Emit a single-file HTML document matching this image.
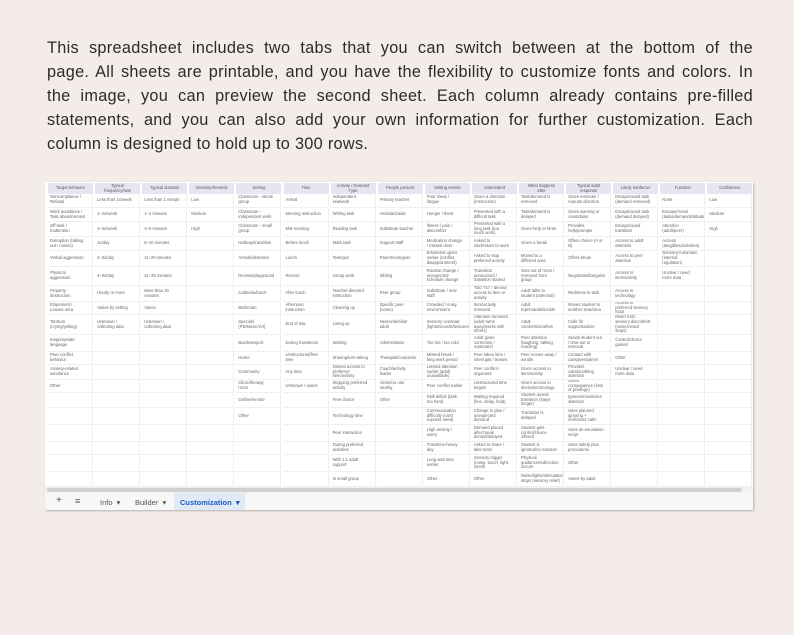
<!DOCTYPE html>
<html><head><meta charset="utf-8">
<style>
html,body{margin:0;padding:0;}
body{width:794px;height:635px;background:#f4ece8;position:relative;overflow:hidden;font-family:"Liberation Sans",sans-serif;}
.para{position:absolute;left:47px;top:36px;width:706px;font-size:16.3px;letter-spacing:0.3px;color:#2b2b2b;}
.para div{height:24px;line-height:24px;text-align:justify;text-align-last:justify;white-space:nowrap;overflow:hidden;}
.para div.last{text-align-last:left;}
.sheet{position:absolute;left:45px;top:182px;width:708px;height:328px;background:#fff;box-shadow:1px 1px 2px rgba(0,0,0,0.25);}
.col{position:absolute;top:0;width:47px;}
.h{position:absolute;left:1px;right:1px;top:1px;height:11px;background:#e6e6f2;font-size:4.2px;line-height:4.6px;color:#555;display:flex;align-items:center;justify-content:center;text-align:center;padding:0 6px;}
.c{position:absolute;left:0;width:46px;border-right:1px solid #efefef;border-bottom:1px solid #efefef;font-size:4.2px;line-height:4.8px;color:#666;display:flex;align-items:center;padding-left:3px;padding-right:6px;box-sizing:border-box;overflow:hidden;}
.scroll{position:absolute;left:0;top:305px;width:708px;height:6px;background:#f1f1f1;}
.thumb{position:absolute;left:2px;top:1px;width:695px;height:4px;background:#d0d0d0;border-radius:2px;}
.tabs{position:absolute;left:0;top:311px;width:708px;height:17px;background:#f7f7f7;font-size:7.5px;color:#555;}
.tabs span{position:absolute;top:5px;}
.cust{position:absolute;left:129px;top:0;width:71px;height:17px;background:#e2e9f6;}
</style></head><body>
<div class="para">
<div>This spreadsheet includes two tabs that you can switch between at the bottom of the</div>
<div>page. All sheets are printable, and you have the flexibility to customize fonts and colors. In</div>
<div>the image, you can preview the second sheet. Each column already contains pre-filled</div>
<div>statements, and you can also add your own information for further customization. Each</div>
<div class="last">column is designed to hold up to 300 rows.</div>
</div>
<div class="sheet" id="sheet">
<div class="scroll"><div class="thumb"></div></div>
<div class="tabs">
<span style="left:11px;font-size:10px;top:2px">+</span>
<span style="left:30px;font-size:9px;top:3px">≡</span>
<span style="left:55px">Info &nbsp;▾</span>
<span style="left:90px">Builder &nbsp;▾</span>
<div class="cust"></div>
<span style="left:135px;color:#1a5cc8;font-weight:bold">Customization &nbsp;▾</span>
</div>
</div>
<script>
var H=["Target behavior","Typical frequency/rate","Typical duration","Intensity/Severity","Setting","Time","Activity / Demand Type","People present","Setting events","Antecedent","What happens after","Typical adult response","Likely reinforcer","Function","Confidence"];
var D=[
["Noncompliance / Refusal","Work avoidance / Task abandonment","Off-task / Inattention","Disruption (talking out / noises)","Verbal aggression","Physical aggression","Property destruction","Elopement / Leaves area","Tantrum (crying/yelling)","Inappropriate language","Peer conflict behavior","Anxiety-related avoidance","Other"],
["Less than 1x/week","1–2x/week","3–4x/week","1x/day","2–3x/day","4–5x/day","Hourly or more","Varies by setting","Unknown / collecting data"],
["Less than 1 minute","1–2 minutes","3–5 minutes","6–10 minutes","11–20 minutes","21–30 minutes","More than 30 minutes","Varies","Unknown / collecting data"],
["Low","Medium","High"],
["Classroom - whole group","Classroom - independent work","Classroom - small group","Hallway/transition","Arrival/dismissal","Recess/playground","Cafeteria/lunch","Bathroom","Specials (PE/Music/Art)","Bus/transport","Home","Community","Clinic/therapy room","Online/remote","Other"],
["Arrival","Morning instruction","Mid-morning","Before lunch","Lunch","Recess","After lunch","Afternoon instruction","End of day","During transitions","Unstructured/free time","Any time","Unknown / varies"],
["Independent seatwork","Writing task","Reading task","Math task","Test/quiz","Group work","Teacher-directed instruction","Cleaning up","Lining up","Waiting","Sharing/turn-taking","Denied access to preferred item/activity","Stopping preferred activity","Free choice","Technology time","Peer interaction","During preferred activities","With 1:1 adult support","In small group"],
["Primary teacher","Assistant/aide","Substitute teacher","Support staff","Parent/caregiver","Sibling","Peer group","Specific peer (name)","New/unfamiliar adult","Administrator","Therapist/counselor","Coach/activity leader","Alone/no one nearby","Other"],
["Poor sleep / fatigue","Hunger / thirst","Illness / pain / discomfort","Medication change / missed dose","Emotional upset earlier (conflict, disappointment)","Routine change / unexpected schedule change","Substitute / new staff","Crowded / noisy environment","Sensory overload (lights/sounds/textures)","Too hot / too cold","Missed break / long work period","Limited attention earlier (adult unavailable)","Peer conflict earlier","Skill deficit (task too hard)","Communication difficulty (can't express need)","High anxiety / worry","Transition-heavy day","Long wait time earlier","Other"],
["Given a direction (instruction)","Presented with a difficult task","Presented with a long task (too much work)","Asked to start/return to work","Asked to stop preferred activity","Transition announced / transition started","Told \"no\" / denied access to item or activity","Item/activity removed","Attention removed (adult turns away/works with others)","Adult gives correction / reprimand","Peer takes item / interrupts / teases","Peer conflict / argument","Unstructured time begins","Waiting required (line, delay, hold)","Change in plan / unexpected demand","Demand placed after break denied/delayed","Asked to share / take turns","Sensory trigger (noise, touch, light, smell)","Other"],
["Task/demand is removed","Task/demand is delayed","Given help or hints","Given a break","Moved to a different area","Sent out of room / removed from group","Adult talks to student (attention)","Adult reprimands/scolds","Adult comforts/soothes","Peer attention (laughing, talking, reacting)","Peer moves away / avoids","Given access to item/activity","Given access to device/technology","Student avoids transition (stays longer)","Transition is delayed","Student gets control/choice offered","Student is ignored/no reaction","Physical guidance/redirection occurs","Noise/lights/stimulation stops (sensory relief)"],
["Gives reminder / repeats direction","Gives warning or countdown","Provides help/prompts","Offers choice (A or B)","Offers break","Negotiates/bargains","Redirects to task","Moves student to another seat/area","Calls for support/admin","Sends student out / time-out or removal","Contact with caregiver/parent","Provides calm/soothing attention","Gives consequence (loss of privilege)","Ignores/minimizes attention","Uses planned ignoring + reinforces calm","Uses de-escalation script","Uses safety plan procedures","Other","Varies by adult"],
["Escape/avoid task (demand removed)","Escape/avoid task (demand delayed)","Escape/avoid transition","Access to adult attention","Access to peer attention","Access to item/activity","Access to technology","Access to preferred sensory input","Relief from sensory discomfort (noise/crowd stops)","Control/choice gained","Other","Unclear / need more data"],
["None","Escape/Avoid (tasks/demands/situations)","Attention (adult/peer)","Access (tangibles/activities)","Sensory/Automatic (internal regulation)","Unclear / need more data"],
["Low","Medium","High"]];
var R=[193,208,222,237,251,267,286,302,315,335,352,365,380,393,408,425,442,455,472,487];
var s=document.getElementById('sheet'),h='';
for(var i=0;i<15;i++){
 h+='<div class="col" style="left:'+(2+i*47.1)+'px"><div class="h">'+H[i]+'</div>';
 for(var r=0;r<19;r++){var t=(D[i][r]||'');
  h+='<div class="c" style="top:'+(R[r]-182)+'px;height:'+(R[r+1]-R[r])+'px">'+t+'</div>';}
 h+='</div>';}
s.insertAdjacentHTML('afterbegin',h);
</script>
</body></html>
